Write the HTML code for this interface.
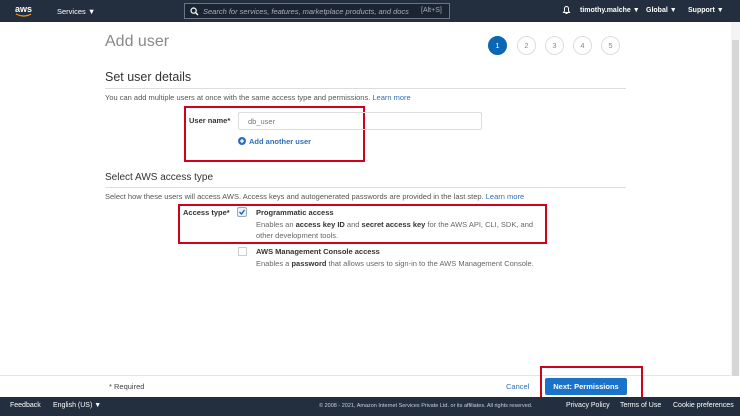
<!DOCTYPE html>
<html><head><meta charset="utf-8"><style>
*{margin:0;padding:0;box-sizing:border-box}
body{width:740px;height:416px;position:relative;overflow:hidden;background:#fff;font-family:"Liberation Sans",sans-serif;color:#444}
.a{position:absolute;white-space:nowrap;line-height:1.2}
.top{left:0;top:0;width:740px;height:22px;background:#232f3e}
.w{color:#fff;font-size:7.5px}
.c{width:19px;height:19px;border-radius:50%;border:1px solid #ddd;font-size:7.5px;color:#888;text-align:center;line-height:17px}
.hr{height:1px;background:#ddd}
.s{font-size:7.5px;color:#555}
.red{border:2px solid #d0021b}
.lnk{color:#2e6fb7}
b{color:#333}
</style></head><body>
<div class="a top"></div>
<svg class="a" style="left:14px;top:4px" width="20" height="14" viewBox="0 0 20 14"><text x="1" y="8" fill="#fff" font-size="9" font-family="Liberation Sans" font-weight="bold">aws</text><path d="M2 10 Q10 14 17 10" stroke="#f90" stroke-width="1.2" fill="none"/></svg>
<div class="a w" style="left:57px;top:7px">Services ▼</div>
<div class="a" style="left:184px;top:3px;width:266px;height:16px;border:1px solid #6a7686;background:#1b2531"></div>
<svg class="a" style="left:190px;top:7px" width="9" height="9" viewBox="0 0 9 9"><circle cx="3.6" cy="3.6" r="2.6" stroke="#fff" stroke-width="1.2" fill="none"/><path d="M5.5 5.5 8 8" stroke="#fff" stroke-width="1.4"/></svg>
<div class="a" style="left:203px;top:7px;font-size:7.5px;color:#aab;font-style:italic">Search for services, features, marketplace products, and docs</div>
<div class="a" style="left:421px;top:7px;font-size:7px;color:#aab">[Alt+S]</div>
<svg class="a" style="left:562px;top:5px" width="9" height="10" viewBox="0 0 9 10"><path d="M1.5 7.5h6L6.5 6V3.5a2 2 0 0 0-4 0V6z" fill="none" stroke="#fff" stroke-width="1"/><path d="M3.5 8.5h2" stroke="#fff"/></svg>
<div class="a w" style="left:580px;top:7px;font-size:7px;font-weight:bold">timothy.malche ▼</div>
<div class="a w" style="left:646px;top:7px;font-size:7px;font-weight:bold">Global ▼</div>
<div class="a w" style="left:688px;top:7px;font-size:7px;font-weight:bold">Support ▼</div>
<div class="a" style="left:731px;top:22px;width:9px;height:354px;background:#f4f4f4"></div>
<div class="a" style="left:732px;top:40px;width:7px;height:336px;background:#d6d6d6"></div>
<div class="a" style="left:105px;top:32px;font-size:16px;color:#888">Add user</div>
<div class="a c" style="left:488px;top:36px;background:#0b66b5;border-color:#0b66b5;color:#fff">1</div>
<div class="a c" style="left:517px;top:36px">2</div>
<div class="a c" style="left:545px;top:36px">3</div>
<div class="a c" style="left:573px;top:36px">4</div>
<div class="a c" style="left:601px;top:36px">5</div>
<div class="a" style="left:105px;top:70px;font-size:12.5px;color:#333">Set user details</div>
<div class="a hr" style="left:105px;top:88px;width:521px"></div>
<div class="a s" style="left:105px;top:93px">You can add multiple users at once with the same access type and permissions. <span class="lnk">Learn more</span></div>
<div class="a red" style="left:184px;top:106px;width:181px;height:56px"></div>
<div class="a" style="left:189px;top:116px;font-size:7.5px;font-weight:bold;color:#333">User name*</div>
<div class="a" style="left:238px;top:112px;width:244px;height:18px;border:1px solid #ddd;border-radius:2px;font-size:7.5px;color:#777;padding:4px 0 0 9px">db_user</div>
<svg class="a" style="left:238px;top:137px" width="8" height="8" viewBox="0 0 8 8"><circle cx="4" cy="4" r="4" fill="#2e6fb7"/><path d="M4 2v4M2 4h4" stroke="#fff" stroke-width="1.3"/></svg>
<div class="a lnk" style="left:249px;top:137px;font-size:7.5px;font-weight:bold">Add another user</div>
<div class="a" style="left:105px;top:172px;font-size:10px;color:#333">Select AWS access type</div>
<div class="a hr" style="left:105px;top:187px;width:521px"></div>
<div class="a s" style="left:105px;top:192px">Select how these users will access AWS. Access keys and autogenerated passwords are provided in the last step. <span class="lnk">Learn more</span></div>
<div class="a red" style="left:178px;top:204px;width:369px;height:40px"></div>
<div class="a" style="left:183px;top:208px;font-size:7.5px;font-weight:bold;color:#333">Access type*</div>
<svg class="a" style="left:237px;top:207px" width="10" height="10" viewBox="0 0 10 10"><rect x=".5" y=".5" width="9" height="9" rx="1.5" fill="#e8f0fa" stroke="#9ab"/><path d="M2.5 5l2 2 3-4" stroke="#1a5fa8" stroke-width="1.3" fill="none"/></svg>
<div class="a" style="left:256px;top:208px;font-size:7.5px;font-weight:bold;color:#333">Programmatic access</div>
<div class="a s" style="left:256px;top:220px;color:#666">Enables an <b>access key ID</b> and <b>secret access key</b> for the AWS API, CLI, SDK, and</div>
<div class="a s" style="left:256px;top:231px;color:#666">other development tools.</div>
<div class="a" style="left:238px;top:247px;width:9px;height:9px;border:1px solid #ccc;border-radius:1px"></div>
<div class="a" style="left:256px;top:247px;font-size:7.5px;font-weight:bold;color:#333">AWS Management Console access</div>
<div class="a s" style="left:256px;top:259px;color:#666">Enables a <b>password</b> that allows users to sign-in to the AWS Management Console.</div>
<div class="a hr" style="left:0;top:375px;width:731px;background:#e4e4e4"></div>
<div class="a s" style="left:109px;top:382px;color:#444">* Required</div>
<div class="a lnk" style="left:506px;top:382px;font-size:7.5px">Cancel</div>
<div class="a" style="left:545px;top:378px;width:82px;height:17px;background:#1a73c9;border-radius:2px;color:#fff;font-size:7.5px;font-weight:bold;text-align:center;line-height:17px">Next: Permissions</div>
<div class="a red" style="left:540px;top:366px;width:103px;height:43px"></div>
<div class="a" style="left:0;top:397px;width:740px;height:19px;background:#232f3e"></div>
<div class="a w" style="left:10px;top:402px;font-size:7px">Feedback</div>
<div class="a w" style="left:53px;top:402px;font-size:7px">English (US) ▼</div>
<div class="a" style="left:319px;top:403px;font-size:5.5px;color:#ccd">© 2008 - 2021, Amazon Internet Services Private Ltd. or its affiliates. All rights reserved.</div>
<div class="a w" style="left:566px;top:402px;font-size:7px">Privacy Policy</div>
<div class="a w" style="left:620px;top:402px;font-size:7px">Terms of Use</div>
<div class="a w" style="left:673px;top:402px;font-size:7px">Cookie preferences</div>
</body></html>
